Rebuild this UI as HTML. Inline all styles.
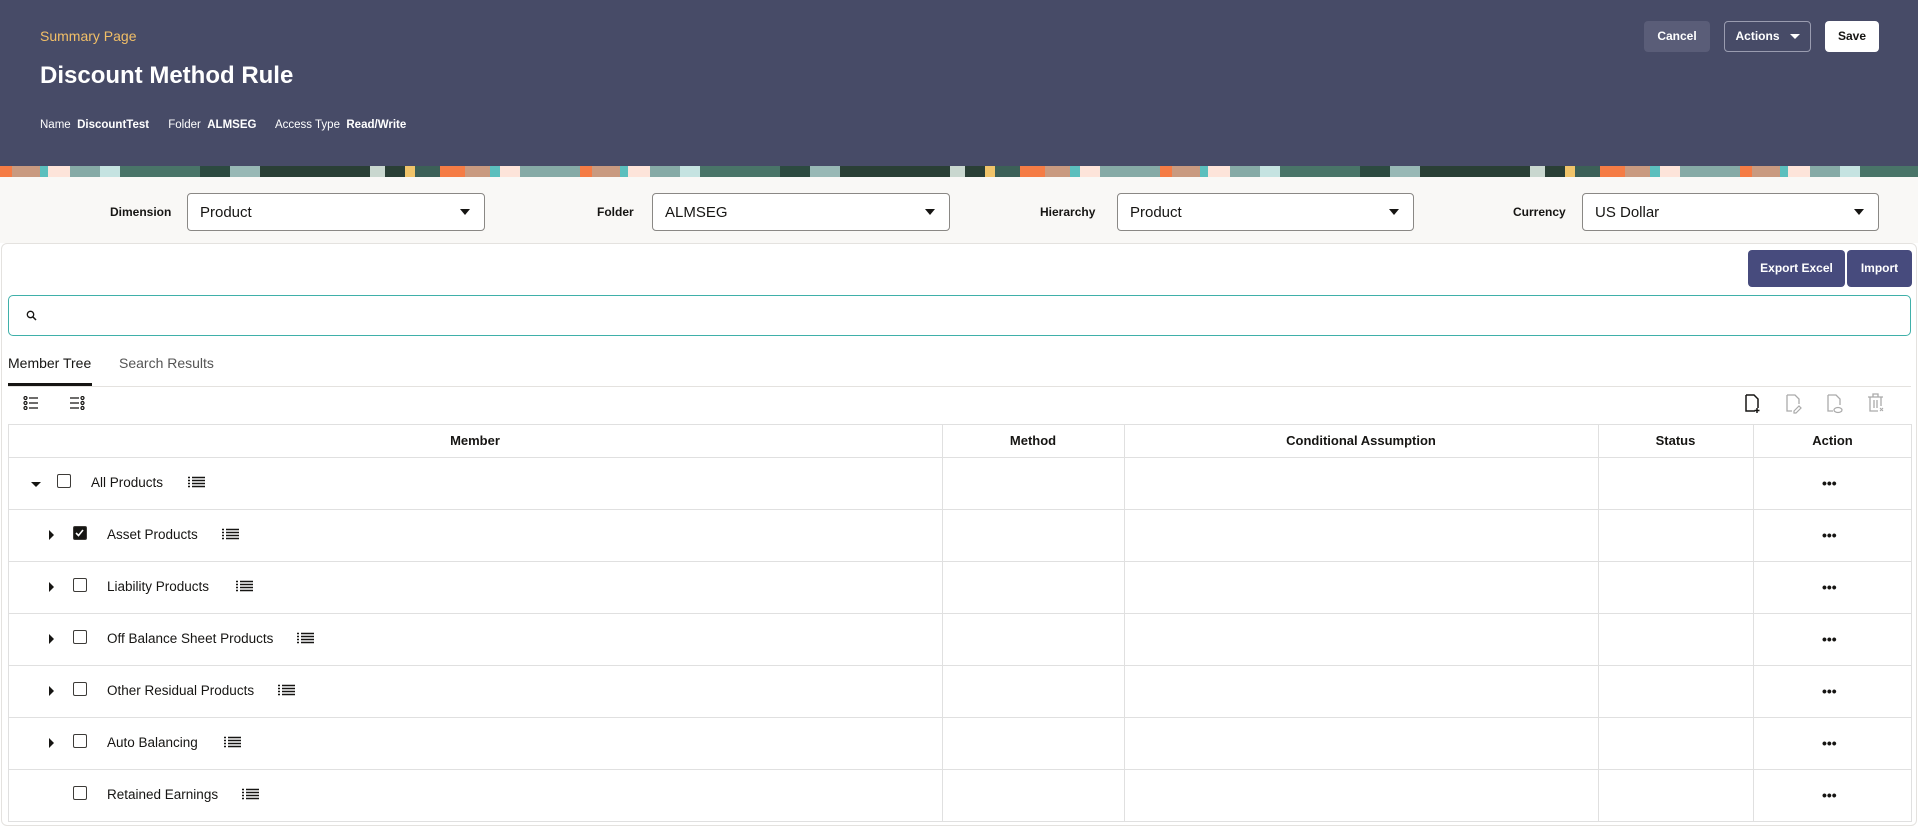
<!DOCTYPE html>
<html><head><meta charset="utf-8"><style>
*{box-sizing:border-box;margin:0;padding:0}
body{width:1918px;height:826px;overflow:hidden;background:#fff;font-family:"Liberation Sans",sans-serif;color:#161513;position:relative}
.abs{position:absolute}
.hdr{left:0;top:0;width:1918px;height:166px;background:#474b67}
.strip{left:0;top:166px;width:1918px;height:11px;background:repeating-linear-gradient(90deg,#f57c45 0 12px,#c99a80 12px 40px,#5cbfbd 40px 48px,#fde4da 48px 70px,#86aaa6 70px 100px,#c5e3e1 100px 120px,#497468 120px 200px,#2c4a40 200px 230px,#98b8b5 230px 260px,#2a3f36 260px 370px,#c9d7cf 370px 385px,#2a3f36 385px 405px,#f0c46a 405px 415px,#3c6057 415px 440px,#f57c45 440px 465px,#c99a80 465px 490px,#5cbfbd 490px 500px,#fde4da 500px 520px,#86aaa6 520px 580px)}
.filt{left:0;top:177px;width:1918px;height:66px;background:#f9f8f6}
.lbl{font-size:12px;font-weight:bold;color:#161513}
.dd{height:38px;border:1px solid #8a8885;border-radius:4px;background:#fff;font-size:15px;padding:10px 12px}
.dd:after{content:"";position:absolute;right:14px;top:15px;border-left:5px solid transparent;border-right:5px solid transparent;border-top:6px solid #161513}
.btn{font-size:12px;font-weight:bold;text-align:center;border-radius:4px}
.th{font-size:13px;font-weight:bold;text-align:center}
.txt{font-size:13.5px}
.cb{width:14px;height:14px;border:1.5px solid #3d3b38;border-radius:2px;background:#fff}
.cb.on{background:#161513}
.car{border-top:5px solid transparent;border-bottom:5px solid transparent;border-left:5px solid #161513}
.cardn{border-left:5px solid transparent;border-right:5px solid transparent;border-top:5px solid #161513}
.dots{font-size:14px;font-weight:bold;letter-spacing:0px;line-height:10px}
</style></head><body>
<div class="abs hdr"></div>
<div class="abs strip"></div>
<div class="abs" style="left:40px;top:28px;font-size:14px;color:#f2bf67">Summary Page</div>
<div class="abs" style="left:40px;top:62px;font-size:24px;font-weight:bold;color:#fff">Discount Method Rule</div>
<div class="abs" style="left:40px;top:119px;font-size:11.5px;color:#fff">Name&nbsp; <b>DiscountTest</b>&nbsp;&nbsp;&nbsp;&nbsp;&nbsp; Folder&nbsp; <b>ALMSEG</b>&nbsp;&nbsp;&nbsp;&nbsp;&nbsp; Access Type&nbsp; <b>Read/Write</b></div>
<div class="abs btn" style="left:1644px;top:21px;width:66px;height:31px;background:#5a5d78;color:#fff;line-height:31px">Cancel</div>
<div class="abs btn" style="left:1724px;top:21px;width:87px;height:31px;border:1px solid #9a9cb0;color:#fff;line-height:29px">Actions&nbsp;&nbsp; <span style="display:inline-block;vertical-align:middle;border-left:5px solid transparent;border-right:5px solid transparent;border-top:5px solid #fff"></span></div>
<div class="abs btn" style="left:1825px;top:21px;width:54px;height:31px;background:#fff;color:#161513;line-height:31px">Save</div>
<div class="abs filt"></div>
<div class="abs lbl" style="left:110px;top:205px">Dimension</div>
<div class="abs dd" style="left:187px;top:193px;width:298px">Product</div>
<div class="abs lbl" style="left:597px;top:205px">Folder</div>
<div class="abs dd" style="left:652px;top:193px;width:298px">ALMSEG</div>
<div class="abs lbl" style="left:1040px;top:205px">Hierarchy</div>
<div class="abs dd" style="left:1117px;top:193px;width:297px">Product</div>
<div class="abs lbl" style="left:1513px;top:205px">Currency</div>
<div class="abs dd" style="left:1582px;top:193px;width:297px">US Dollar</div>
<div class="abs" style="left:1px;top:243px;width:1916px;height:583px;border:1px solid #e4e2df;border-radius:6px;background:#fff"></div>
<div class="abs btn" style="left:1748px;top:250px;width:97px;height:37px;background:#474b7d;color:#fff;line-height:37px">Export Excel</div>
<div class="abs btn" style="left:1847px;top:250px;width:65px;height:37px;background:#474b7d;color:#fff;line-height:37px">Import</div>
<div class="abs" style="left:8px;top:295px;width:1903px;height:41px;border:1px solid #3fb0a9;border-radius:5px"></div>
<svg class="abs" style="left:26px;top:310px" width="11" height="11"><circle cx="4.5" cy="4.5" r="3.2" fill="none" stroke="#161513" stroke-width="1.3"/><line x1="7" y1="7" x2="10" y2="10" stroke="#161513" stroke-width="1.5"/></svg>
<div class="abs" style="left:8px;top:355px;font-size:14px;color:#161513">Member Tree</div>
<div class="abs" style="left:119px;top:355px;font-size:14px;color:#555">Search Results</div>
<div class="abs" style="left:8px;top:383px;width:84px;height:3px;background:#161513"></div>
<div class="abs" style="left:8px;top:386px;width:1903px;height:1px;background:#e4e2df"></div>
<svg class="abs" style="left:23px;top:396px" width="16" height="14"><g fill="none" stroke="#161513" stroke-width="1.2"><circle cx="2.5" cy="2" r="1.5"/><circle cx="2.5" cy="7" r="1.5"/><circle cx="2.5" cy="12" r="1.5"/><path d="M6 2h9M6 7h9M6 12h9"/></g></svg>
<svg class="abs" style="left:69px;top:396px" width="16" height="14"><g fill="none" stroke="#161513" stroke-width="1.2"><circle cx="13.5" cy="2" r="1.5"/><circle cx="13.5" cy="7" r="1.5"/><circle cx="13.5" cy="12" r="1.5"/><path d="M1 2h9M1 7h9M1 12h9"/></g></svg>
<svg class="abs" style="left:1744px;top:394px" width="18" height="20"><path d="M2 1h8l4 4v9M2 1v16h9" fill="none" stroke="#161513" stroke-width="1.5"/><path d="M13 14v5M10.5 16.5h5" stroke="#161513" stroke-width="1.5"/></svg>
<svg class="abs" style="left:1785px;top:394px" width="18" height="20"><path d="M2 1h8l4 4v5M2 1v16h5" fill="none" stroke="#aaa" stroke-width="1.3"/><path d="M9 17l5-5 2 2-5 5h-2z" fill="none" stroke="#aaa" stroke-width="1.2"/></svg>
<svg class="abs" style="left:1826px;top:394px" width="18" height="20"><path d="M2 1h8l4 4v6M2 1v16h5" fill="none" stroke="#aaa" stroke-width="1.3"/><ellipse cx="12" cy="16" rx="4" ry="2.5" fill="none" stroke="#aaa" stroke-width="1.2"/></svg>
<svg class="abs" style="left:1867px;top:393px" width="18" height="20"><path d="M1 4h15M6 4V1h5v3M3 4v14h8M14 4v9M7 7v8M10 7v8" fill="none" stroke="#aaa" stroke-width="1.3"/><path d="M13 15l3 3M16 15l-3 3" stroke="#aaa" stroke-width="1.1"/></svg>
<div class="abs" style="left:8px;top:424px;width:1904px;height:398px;border:1px solid #e0e0e0"></div>
<div class="abs th" style="left:8px;top:433px;width:934px">Member</div>
<div class="abs th" style="left:942px;top:433px;width:182px">Method</div>
<div class="abs th" style="left:1124px;top:433px;width:474px">Conditional Assumption</div>
<div class="abs th" style="left:1598px;top:433px;width:155px">Status</div>
<div class="abs th" style="left:1753px;top:433px;width:159px">Action</div>
<div class="abs" style="left:942px;top:424px;width:1px;height:398px;background:#e0e0e0"></div>
<div class="abs" style="left:1124px;top:424px;width:1px;height:398px;background:#e0e0e0"></div>
<div class="abs" style="left:1598px;top:424px;width:1px;height:398px;background:#e0e0e0"></div>
<div class="abs" style="left:1753px;top:424px;width:1px;height:398px;background:#e0e0e0"></div>
<div class="abs" style="left:8px;top:457px;width:1904px;height:1px;background:#e0e0e0"></div>
<div class="abs" style="left:8px;top:509px;width:1904px;height:1px;background:#e0e0e0"></div>
<div class="abs" style="left:8px;top:561px;width:1904px;height:1px;background:#e0e0e0"></div>
<div class="abs" style="left:8px;top:613px;width:1904px;height:1px;background:#e0e0e0"></div>
<div class="abs" style="left:8px;top:665px;width:1904px;height:1px;background:#e0e0e0"></div>
<div class="abs" style="left:8px;top:717px;width:1904px;height:1px;background:#e0e0e0"></div>
<div class="abs" style="left:8px;top:769px;width:1904px;height:1px;background:#e0e0e0"></div>

<div class="abs cardn" style="left:31px;top:482px"></div>
<div class="abs cb" style="left:57px;top:474px"></div>
<div class="abs txt" style="left:91px;top:475px">All Products</div>
<svg class="abs" style="left:188px;top:476px" width="17" height="13"><path d="M0 1.5h2M4 1.5h13M0 4.5h2M4 4.5h13M0 7.5h2M4 7.5h13M0 10.5h2M4 10.5h13" stroke="#161513" stroke-width="1.6"/></svg>
<div class="abs dots" style="left:1822px;top:478px">•••</div>

<div class="abs car" style="left:49px;top:530px"></div>
<div class="abs cb on" style="left:73px;top:526px"><svg width="11" height="11" style="position:absolute;left:0;top:0"><path d="M2 6l2.5 2.5L9 3" stroke="#fff" stroke-width="1.6" fill="none"/></svg></div>
<div class="abs txt" style="left:107px;top:527px">Asset Products</div>
<svg class="abs" style="left:222px;top:528px" width="17" height="13"><path d="M0 1.5h2M4 1.5h13M0 4.5h2M4 4.5h13M0 7.5h2M4 7.5h13M0 10.5h2M4 10.5h13" stroke="#161513" stroke-width="1.6"/></svg>
<div class="abs dots" style="left:1822px;top:530px">•••</div>

<div class="abs car" style="left:49px;top:582px"></div>
<div class="abs cb" style="left:73px;top:578px"></div>
<div class="abs txt" style="left:107px;top:579px">Liability Products</div>
<svg class="abs" style="left:236px;top:580px" width="17" height="13"><path d="M0 1.5h2M4 1.5h13M0 4.5h2M4 4.5h13M0 7.5h2M4 7.5h13M0 10.5h2M4 10.5h13" stroke="#161513" stroke-width="1.6"/></svg>
<div class="abs dots" style="left:1822px;top:582px">•••</div>

<div class="abs car" style="left:49px;top:634px"></div>
<div class="abs cb" style="left:73px;top:630px"></div>
<div class="abs txt" style="left:107px;top:631px">Off Balance Sheet Products</div>
<svg class="abs" style="left:297px;top:632px" width="17" height="13"><path d="M0 1.5h2M4 1.5h13M0 4.5h2M4 4.5h13M0 7.5h2M4 7.5h13M0 10.5h2M4 10.5h13" stroke="#161513" stroke-width="1.6"/></svg>
<div class="abs dots" style="left:1822px;top:634px">•••</div>

<div class="abs car" style="left:49px;top:686px"></div>
<div class="abs cb" style="left:73px;top:682px"></div>
<div class="abs txt" style="left:107px;top:683px">Other Residual Products</div>
<svg class="abs" style="left:278px;top:684px" width="17" height="13"><path d="M0 1.5h2M4 1.5h13M0 4.5h2M4 4.5h13M0 7.5h2M4 7.5h13M0 10.5h2M4 10.5h13" stroke="#161513" stroke-width="1.6"/></svg>
<div class="abs dots" style="left:1822px;top:686px">•••</div>

<div class="abs car" style="left:49px;top:738px"></div>
<div class="abs cb" style="left:73px;top:734px"></div>
<div class="abs txt" style="left:107px;top:735px">Auto Balancing</div>
<svg class="abs" style="left:224px;top:736px" width="17" height="13"><path d="M0 1.5h2M4 1.5h13M0 4.5h2M4 4.5h13M0 7.5h2M4 7.5h13M0 10.5h2M4 10.5h13" stroke="#161513" stroke-width="1.6"/></svg>
<div class="abs dots" style="left:1822px;top:738px">•••</div>

<div class="abs cb" style="left:73px;top:786px"></div>
<div class="abs txt" style="left:107px;top:787px">Retained Earnings</div>
<svg class="abs" style="left:242px;top:788px" width="17" height="13"><path d="M0 1.5h2M4 1.5h13M0 4.5h2M4 4.5h13M0 7.5h2M4 7.5h13M0 10.5h2M4 10.5h13" stroke="#161513" stroke-width="1.6"/></svg>
<div class="abs dots" style="left:1822px;top:790px">•••</div>
</body></html>
